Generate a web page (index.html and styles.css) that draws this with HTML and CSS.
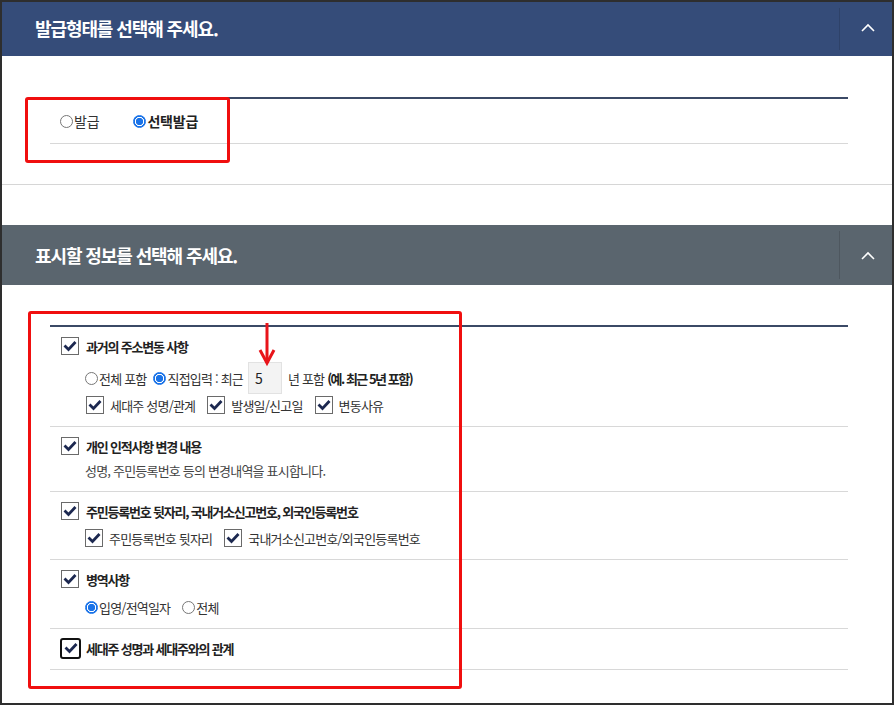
FILE: index.html
```html
<!DOCTYPE html>
<html lang="ko">
<head>
<meta charset="utf-8">
<title>발급형태 선택</title>
<link rel="stylesheet" href="styles.css">
</head>
<body>
<div class="frame">
  <section class="panel">
    <div class="panel-head navy">
      <h2 class="panel-title">발급형태를 선택해 주세요.</h2>
      <div class="toggle"><svg class="chev" width="14" height="9" viewBox="0 0 14 9"><polyline points="1,8 7,2 13,8" fill="none" stroke="#fff" stroke-width="1.6"/></svg></div>
    </div>
    <div class="panel-body body1">
      <div class="box">
        <div class="radio-row">
          <label class="radio big"><span class="rb"></span>발급</label>
          <label class="radio big strong"><span class="rb on"></span>선택발급</label>
        </div>
      </div>
    </div>
  </section>

  <section class="panel panel2">
    <div class="panel-head slate">
      <h2 class="panel-title">표시할 정보를 선택해 주세요.</h2>
      <div class="toggle"><svg class="chev" width="14" height="9" viewBox="0 0 14 9"><polyline points="1,8 7,2 13,8" fill="none" stroke="#fff" stroke-width="1.6"/></svg></div>
    </div>
    <div class="panel-body body2">
      <div class="box">
        <div class="item">
          <div class="item-title"><span class="cb"><svg width="14" height="12" viewBox="0 0 14 12"><polyline points="1.5,5.5 5.5,9.5 12.5,2" fill="none" stroke="#1c2850" stroke-width="2.8"/></svg></span>과거의 주소변동 사항</div>
          <div class="sub sub-input">
            <label class="radio"><span class="rb"></span>전체 포함</label>
            <label class="radio"><span class="rb on"></span>직접입력 : 최근</label>
            <span class="num">5</span>
            <span>년 포함 <b>(예. 최근 5년 포함)</b></span>
          </div>
          <div class="sub sub-tight">
            <label class="chk"><span class="cb"><svg width="14" height="12" viewBox="0 0 14 12"><polyline points="1.5,5.5 5.5,9.5 12.5,2" fill="none" stroke="#1c2850" stroke-width="2.8"/></svg></span>세대주 성명/관계</label>
            <label class="chk"><span class="cb"><svg width="14" height="12" viewBox="0 0 14 12"><polyline points="1.5,5.5 5.5,9.5 12.5,2" fill="none" stroke="#1c2850" stroke-width="2.8"/></svg></span>발생일/신고일</label>
            <label class="chk"><span class="cb"><svg width="14" height="12" viewBox="0 0 14 12"><polyline points="1.5,5.5 5.5,9.5 12.5,2" fill="none" stroke="#1c2850" stroke-width="2.8"/></svg></span>변동사유</label>
          </div>
        </div>

        <div class="item">
          <div class="item-title"><span class="cb"><svg width="14" height="12" viewBox="0 0 14 12"><polyline points="1.5,5.5 5.5,9.5 12.5,2" fill="none" stroke="#1c2850" stroke-width="2.8"/></svg></span>개인 인적사항 변경 내용</div>
          <div class="sub desc">성명, 주민등록번호 등의 변경내역을 표시합니다.</div>
        </div>

        <div class="item">
          <div class="item-title"><span class="cb"><svg width="14" height="12" viewBox="0 0 14 12"><polyline points="1.5,5.5 5.5,9.5 12.5,2" fill="none" stroke="#1c2850" stroke-width="2.8"/></svg></span>주민등록번호 뒷자리, 국내거소신고번호, 외국인등록번호</div>
          <div class="sub">
            <label class="chk"><span class="cb"><svg width="14" height="12" viewBox="0 0 14 12"><polyline points="1.5,5.5 5.5,9.5 12.5,2" fill="none" stroke="#1c2850" stroke-width="2.8"/></svg></span>주민등록번호 뒷자리</label>
            <label class="chk"><span class="cb"><svg width="14" height="12" viewBox="0 0 14 12"><polyline points="1.5,5.5 5.5,9.5 12.5,2" fill="none" stroke="#1c2850" stroke-width="2.8"/></svg></span>국내거소신고번호/외국인등록번호</label>
          </div>
        </div>

        <div class="item">
          <div class="item-title"><span class="cb"><svg width="14" height="12" viewBox="0 0 14 12"><polyline points="1.5,5.5 5.5,9.5 12.5,2" fill="none" stroke="#1c2850" stroke-width="2.8"/></svg></span>병역사항</div>
          <div class="sub sub-mil">
            <label class="radio"><span class="rb on"></span>입영/전역일자</label>
            <label class="radio"><span class="rb"></span>전체</label>
          </div>
        </div>

        <div class="item last">
          <div class="item-title"><span class="cb focus"><svg width="14" height="12" viewBox="0 0 14 12"><polyline points="1.5,5.5 5.5,9.5 12.5,2" fill="none" stroke="#1c2850" stroke-width="2.8"/></svg></span>세대주 성명과 세대주와의 관계</div>
        </div>
      </div>
    </div>
  </section>

  <div class="mark mark1"></div>
  <div class="mark mark2"></div>
  <svg class="arrow" width="26" height="50" viewBox="0 0 26 50"><line x1="12" y1="3" x2="12" y2="43" stroke="#e8141a" stroke-width="3"/><polyline points="5,30 12,43 19,30" fill="none" stroke="#e8141a" stroke-width="3"/></svg>
</div>
</body>
</html>
```

FILE: styles.css
```css
html, body {
  margin: 0;
  padding: 0;
  background: #fff;
}

.frame {
  position: relative;
  width: 894px;
  height: 705px;
  box-sizing: border-box;
  border: 2px solid #2e2e2e;
  overflow: hidden;
  background: #fff;
  font-family: "Noto Sans CJK KR", "Noto Sans", sans-serif;
  color: #222;
}

.panel-head {
  display: flex;
  align-items: center;
}

.navy {
  height: 54px;
  background: #354c79;
}

.slate {
  height: 60px;
  background: #5a656e;
}

.panel-title {
  flex: 1;
  margin: 0;
  padding-left: 33px;
  font-size: 18px;
  font-weight: 700;
  letter-spacing: -1.1px;
  line-height: 20px;
  color: #fff;
}

.navy .panel-title {
  margin-top: -3px;
}

.toggle {
  align-self: stretch;
  width: 48px;
  margin: 6px 0;
  padding-left: 4px;
  border-left: 1px solid rgba(0, 0, 0, 0.13);
  display: flex;
  align-items: center;
  justify-content: center;
}

.navy .chev {
  margin-top: -4px;
}

.body1 {
  padding: 41px 44px 40px 48px;
  border-bottom: 1px solid #d6d6d6;
}

.box {
  border-top: 2px solid #3b4a66;
}

.radio-row {
  display: flex;
  align-items: center;
  height: 44px;
  padding-left: 10px;
  border-bottom: 1px solid #d8d8d8;
}

.radio {
  display: inline-flex;
  align-items: center;
  margin-right: 8px;
}

.radio.big {
  font-size: 14px;
  letter-spacing: -0.2px;
  color: #333;
  margin-right: 34px;
}

.radio.strong {
  font-weight: 700;
  color: #222;
}

.rb {
  width: 13px;
  height: 13px;
  box-sizing: border-box;
  border: 1px solid #777;
  border-radius: 50%;
  background: #fff;
  margin-right: 1px;
  flex: none;
}

.rb.on {
  border: 1px solid #1a73e8;
  background: radial-gradient(circle, #1a73e8 0 3.4px, #fff 4px 4.4px, #1a73e8 5px);
}

.panel2 {
  margin-top: 40px;
}

.body2 {
  padding: 40px 44px 0 48px;
}

.item {
  padding: 9px 0 10px 11px;
  border-bottom: 1px solid #d8d8d8;
}

.item.last {
  padding-bottom: 11px;
}

.item-title {
  display: flex;
  align-items: center;
  height: 20px;
  font-size: 13px;
  font-weight: 700;
  letter-spacing: -1.2px;
  color: #222;
}

.cb {
  width: 18px;
  height: 18px;
  box-sizing: border-box;
  border: 1px solid #6a6a6a;
  background: #fff;
  margin-right: 7px;
  flex: none;
  display: inline-flex;
  align-items: center;
  justify-content: center;
}

.cb.focus {
  width: 21px;
  height: 21px;
  border: 2px solid #111;
  border-radius: 3px;
  margin-left: -1px;
  margin-right: 5px;
}

.sub {
  display: flex;
  align-items: center;
  height: 22px;
  margin-top: 6px;
  padding-left: 24px;
  font-size: 13px;
  letter-spacing: -0.8px;
  color: #333;
}

.sub b {
  font-weight: 700;
  color: #222;
  letter-spacing: -1.5px;
}

.sub-input {
  height: 32px;
}

.sub-input .radio {
  margin-right: 7px;
}

.sub-tight {
  margin-top: 0;
  padding-left: 25px;
}

.desc {
  margin-top: 3px;
  color: #444;
}

.sub-mil {
  margin-top: 7px;
}

.sub-mil .radio {
  margin-right: 12px;
}

.num {
  width: 34px;
  height: 32px;
  box-sizing: border-box;
  margin: 0 6px 0 -2px;
  padding-left: 6px;
  border: 1px solid #e2e2e2;
  background: #f3f3f3;
  font-size: 14px;
  letter-spacing: 0;
  line-height: 30px;
  color: #222;
}

.chk {
  display: inline-flex;
  align-items: center;
  margin-right: 12px;
}

.chk .cb {
  margin-right: 6px;
}

.mark {
  position: absolute;
  box-sizing: border-box;
  border: 3px solid #f00f0f;
  border-radius: 3px;
}

.mark1 {
  left: 23px;
  top: 95px;
  width: 205px;
  height: 66px;
}

.mark2 {
  left: 26px;
  top: 309px;
  width: 434px;
  height: 378px;
}

.arrow {
  position: absolute;
  left: 253px;
  top: 318px;
}
```
